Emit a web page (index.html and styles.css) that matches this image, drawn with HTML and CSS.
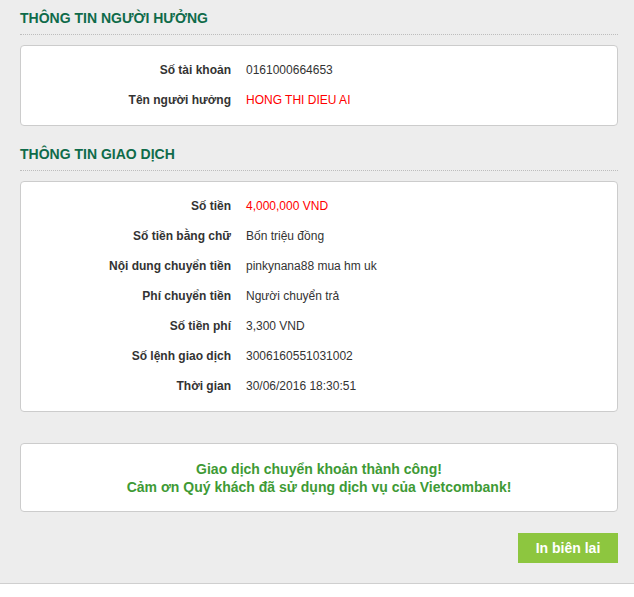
FILE: index.html
```html
<!DOCTYPE html>
<html lang="vi">
<head>
    <meta charset="UTF-8">
    <meta name="viewport" content="width=device-width, initial-scale=1.0">
    <title>Kết quả giao dịch</title>
    <link rel="stylesheet" href="styles.css">
</head>
<body>
    <div class="page">
        <h2 class="section-title">THÔNG TIN NGƯỜI HƯỞNG</h2>
        <div class="info-box">
            <div class="info-row">
                <span class="label">Số tài khoản</span>
                <span class="value">0161000664653</span>
            </div>
            <div class="info-row">
                <span class="label">Tên người hưởng</span>
                <span class="value red">HONG THI DIEU AI</span>
            </div>
        </div>

        <h2 class="section-title second">THÔNG TIN GIAO DỊCH</h2>
        <div class="info-box">
            <div class="info-row">
                <span class="label">Số tiền</span>
                <span class="value red">4,000,000 VND</span>
            </div>
            <div class="info-row">
                <span class="label">Số tiền bằng chữ</span>
                <span class="value">Bốn triệu đồng</span>
            </div>
            <div class="info-row">
                <span class="label">Nội dung chuyển tiền</span>
                <span class="value">pinkynana88 mua hm uk</span>
            </div>
            <div class="info-row">
                <span class="label">Phí chuyển tiền</span>
                <span class="value">Người chuyển trả</span>
            </div>
            <div class="info-row">
                <span class="label">Số tiền phí</span>
                <span class="value">3,300 VND</span>
            </div>
            <div class="info-row">
                <span class="label">Số lệnh giao dịch</span>
                <span class="value">3006160551031002</span>
            </div>
            <div class="info-row">
                <span class="label">Thời gian</span>
                <span class="value">30/06/2016 18:30:51</span>
            </div>
        </div>

        <div class="message-box">
            <p>Giao dịch chuyển khoản thành công!</p>
            <p>Cảm ơn Quý khách đã sử dụng dịch vụ của Vietcombank!</p>
        </div>

        <div class="actions">
            <button class="print-btn">In biên lai</button>
        </div>
    </div>
</body>
</html>
```

FILE: styles.css
```css
* {
    margin: 0;
    padding: 0;
    box-sizing: border-box;
}

body {
    font-family: "Liberation Sans", Arial, Helvetica, sans-serif;
    background: #fff;
    color: #333;
}

.page {
    background: #ededed;
    padding: 8px 16px 20px 20px;
    border-bottom: 1px solid #cfcfcf;
}

.section-title {
    font-size: 14px;
    line-height: 20px;
    font-weight: bold;
    color: #0f6b4a;
    padding-bottom: 6px;
    border-bottom: 1px dotted #bdbdbd;
    margin-bottom: 10px;
}

.section-title.second {
    margin-top: 18px;
}

.info-box {
    background: #fff;
    border: 1px solid #cccccc;
    border-radius: 4px;
    padding: 9px 0 10px;
}

.info-row {
    display: flex;
    align-items: center;
    height: 30px;
    font-size: 12px;
}

.label {
    width: 210px;
    text-align: right;
    font-weight: bold;
    color: #333;
}

.value {
    margin-left: 15px;
    color: #333;
}

.value.red {
    color: #ff0000;
}

.message-box {
    margin-top: 31px;
    background: #fff;
    border: 1px solid #cccccc;
    border-radius: 4px;
    padding: 16px 10px 15px;
    text-align: center;
    font-size: 14px;
    line-height: 18px;
    font-weight: bold;
    color: #3e9a35;
}

.actions {
    display: flex;
    justify-content: flex-end;
    margin-top: 21px;
}

.print-btn {
    width: 100px;
    height: 30px;
    border: none;
    background: #8dc63f;
    color: #fff;
    font-family: inherit;
    font-size: 14px;
    font-weight: bold;
    cursor: pointer;
}
```
